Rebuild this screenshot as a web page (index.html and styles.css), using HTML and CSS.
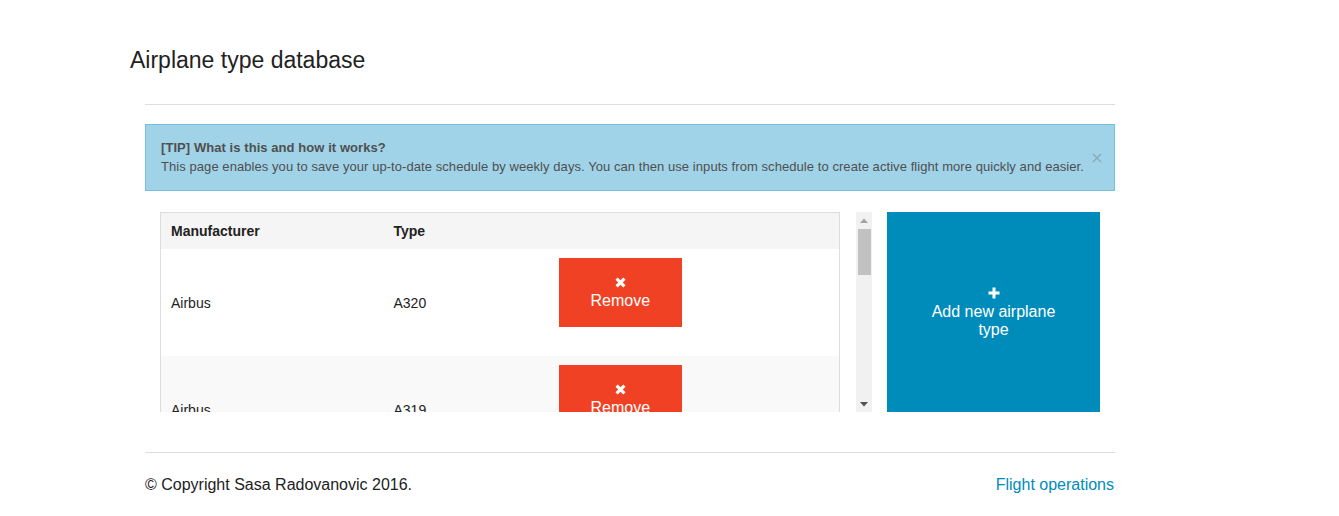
FILE: index.html
```html
<!DOCTYPE html>
<html lang="en">
<head>
<meta charset="utf-8">
<title>Airplane type database</title>
<link rel="stylesheet" href="styles.css">
</head>
<body>
<div class="wrap">
  <h1 class="title">Airplane type database</h1>
  <div class="content">
    <hr class="rule top-rule">
    <div class="alert">
      <div class="alert-text">
        <strong class="alert-head">[TIP] What is this and how it works?</strong>
        <div>This page enables you to save your up-to-date schedule by weekly days. You can then use inputs from schedule to create active flight more quickly and easier.</div>
      </div>
      <button class="close" type="button" aria-label="Close">
        <svg width="10" height="10" viewBox="0 0 10 10"><path d="M1 1 L9 9 M9 1 L1 9" stroke="#86a9b8" stroke-width="1.3" fill="none"/></svg>
      </button>
    </div>
    <div class="work">
      <div class="pane">
        <div class="scroller">
          <table class="types">
            <colgroup><col class="c1"><col class="c2"><col class="c3"></colgroup>
            <thead>
              <tr><th>Manufacturer</th><th>Type</th><th></th></tr>
            </thead>
            <tbody>
              <tr><td>Airbus</td><td>A320</td><td><a class="btn-remove" href="#"><svg class="ico" width="11" height="11" viewBox="0 0 11 11"><path d="M1.6 1.6 L9.4 9.4 M9.4 1.6 L1.6 9.4" stroke="#fff" stroke-width="3.2" fill="none"/></svg><span>Remove</span></a></td></tr>
              <tr><td>Airbus</td><td>A319</td><td><a class="btn-remove" href="#"><svg class="ico" width="11" height="11" viewBox="0 0 11 11"><path d="M1.6 1.6 L9.4 9.4 M9.4 1.6 L1.6 9.4" stroke="#fff" stroke-width="3.2" fill="none"/></svg><span>Remove</span></a></td></tr>
              <tr><td>Airbus</td><td>A321</td><td><a class="btn-remove" href="#"><svg class="ico" width="11" height="11" viewBox="0 0 11 11"><path d="M1.6 1.6 L9.4 9.4 M9.4 1.6 L1.6 9.4" stroke="#fff" stroke-width="3.2" fill="none"/></svg><span>Remove</span></a></td></tr>
              <tr><td>Boeing</td><td>B737-800</td><td><a class="btn-remove" href="#"><svg class="ico" width="11" height="11" viewBox="0 0 11 11"><path d="M1.6 1.6 L9.4 9.4 M9.4 1.6 L1.6 9.4" stroke="#fff" stroke-width="3.2" fill="none"/></svg><span>Remove</span></a></td></tr>
              <tr><td>Boeing</td><td>B757-200</td><td><a class="btn-remove" href="#"><svg class="ico" width="11" height="11" viewBox="0 0 11 11"><path d="M1.6 1.6 L9.4 9.4 M9.4 1.6 L1.6 9.4" stroke="#fff" stroke-width="3.2" fill="none"/></svg><span>Remove</span></a></td></tr>
              <tr><td>Embraer</td><td>E195</td><td><a class="btn-remove" href="#"><svg class="ico" width="11" height="11" viewBox="0 0 11 11"><path d="M1.6 1.6 L9.4 9.4 M9.4 1.6 L1.6 9.4" stroke="#fff" stroke-width="3.2" fill="none"/></svg><span>Remove</span></a></td></tr>
            </tbody>
          </table>
        </div>
        <div class="vbar" aria-hidden="true">
          <div class="vbar-btn">
            <svg width="8" height="5" viewBox="0 0 8 5"><path d="M0 5 L4 0.5 L8 5 Z" fill="#a3a3a3"/></svg>
          </div>
          <div class="vbar-track"><div class="vbar-thumb"></div></div>
          <div class="vbar-btn">
            <svg width="8" height="5" viewBox="0 0 8 5"><path d="M0 0 L8 0 L4 4.5 Z" fill="#505050"/></svg>
          </div>
        </div>
      </div>
      <a class="add" href="#">
        <svg class="ico" width="12" height="12" viewBox="0 0 12 12"><path d="M6 0.5 V11.5 M0.5 6 H11.5" stroke="#fff" stroke-width="3" fill="none"/></svg>
        <span>Add new airplane type</span>
      </a>
    </div>
    <hr class="rule foot-rule">
    <footer class="foot">
      <span>© Copyright Sasa Radovanovic 2016.</span>
      <a class="foot-link" href="#">Flight operations</a>
    </footer>
  </div>
</div>
</body>
</html>
```

FILE: styles.css
```css
html, body {
  margin: 0;
  padding: 0;
  background: #fff;
}

body {
  font-family: "Liberation Sans", Arial, Helvetica, sans-serif;
  color: #222;
}

.wrap {
  width: 1000px;
  margin-left: 130px;
}

.title {
  margin: 48px 0 0;
  font-size: 23px;
  font-weight: normal;
  line-height: 25px;
  color: #222;
}

.content {
  padding: 0 15px;
}

.rule {
  border: 0;
  border-top: 1px solid #ddd;
  height: 0;
}

.top-rule {
  margin: 31px 0 19px;
}

.alert {
  display: flex;
  align-items: center;
  justify-content: space-between;
  background: #a0d3e8;
  border: 1px solid #74bfdd;
  padding: 14px 15px;
  font-size: 13px;
  line-height: 18.5px;
  letter-spacing: 0.065px;
  color: #4f4f4f;
  margin-bottom: 21px;
}

.alert-head {
  display: block;
  font-weight: bold;
}

.close {
  border: 0;
  background: none;
  padding: 0;
  margin: 0 -3px 0 0;
  width: 10px;
  height: 10px;
  display: flex;
  cursor: pointer;
}

.work {
  display: flex;
  gap: 15px;
  padding: 0 15px;
  height: 200px;
}

.pane {
  display: flex;
  width: 712px;
  height: 200px;
  flex: none;
}

.scroller {
  width: 696px;
  height: 200px;
  overflow: hidden;
  flex: none;
}

.vbar {
  width: 16px;
  height: 200px;
  background: #f1f1f1;
  display: flex;
  flex-direction: column;
  flex: none;
}

.vbar-btn {
  height: 16px;
  display: flex;
  align-items: center;
  justify-content: center;
  flex: none;
}

.vbar-track {
  flex: 1;
  padding: 1px 1px 0 2px;
}

.vbar-thumb {
  height: 46px;
  background: #c1c1c1;
}

.types {
  width: 680px;
  border-collapse: collapse;
  border: 1px solid #ddd;
  font-size: 14px;
  line-height: 20px;
  color: #222;
}

.c1 { width: 223px; }
.c2 { width: 165px; }

.types th {
  background: #f5f5f5;
  text-align: left;
  font-weight: bold;
  padding: 8px 10px;
}

.types td {
  padding: 9px 10px;
  vertical-align: middle;
}

.types tbody tr:nth-child(odd) td {
  background: #fff;
}

.types tbody tr:nth-child(even) td {
  background: #f9f9f9;
}

.btn-remove {
  display: inline-flex;
  flex-direction: column;
  align-items: center;
  background: #f04124;
  color: #fff;
  text-decoration: none;
  font-size: 16px;
  line-height: 18px;
  padding: 16px 32px 17px;
  margin-bottom: 20px;
  vertical-align: top;
}

.btn-remove .ico {
  margin: 3px 0 4px;
}

.add {
  width: 213px;
  height: 200px;
  flex: none;
  box-sizing: border-box;
  background: #008cba;
  color: #fff;
  text-decoration: none;
  display: flex;
  flex-direction: column;
  align-items: center;
  justify-content: center;
  text-align: center;
  padding: 2px 32px 0;
  font-size: 16px;
  line-height: 18.5px;
}

.add .ico {
  margin-bottom: 4px;
}

.foot-rule {
  margin: 40px 0 0;
}

.foot {
  display: flex;
  justify-content: space-between;
  padding-top: 23px;
  font-size: 16px;
  line-height: 18px;
  color: #222;
}

.foot-link {
  color: #008cba;
  text-decoration: none;
  margin-right: 1px;
}
```
